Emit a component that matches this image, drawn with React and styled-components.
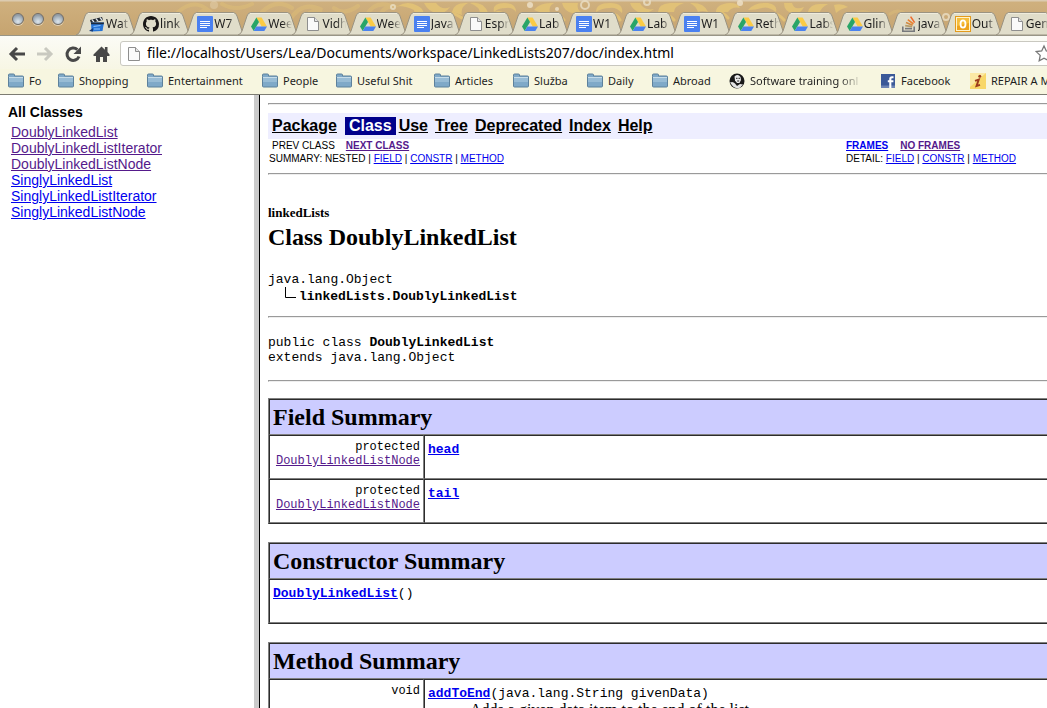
import React from "react";
import styled, { createGlobalStyle } from "styled-components";

const GlobalStyle = createGlobalStyle`
  *, *::before, *::after { box-sizing: border-box; }
  html, body, #root { height: 100%; }
  body {
    margin: 0;
    overflow: hidden;
    background: #ffffff;
    color: #000000;
    font-family: "Liberation Serif", serif;
  }
`;

/* ---------- window frame ---------- */

const Window = styled.div`
  display: flex;
  flex-direction: column;
  height: 100vh;
  overflow: hidden;
`;

const UI_FONT = `"Noto Sans", "Open Sans", sans-serif`;

const TitleBar = styled.header`
  position: relative;
  display: flex;
  align-items: flex-end;
  flex: none;
  height: 36px;
  overflow: hidden;
  background: linear-gradient(#dccbb0 0, #dccbb0 1px, #cfb07e 2px, #c6a470 100%);
  border-bottom: 1px solid #989586;
`;

const Ornament = styled.svg`
  position: absolute;
  top: 0;
  left: 0;
  width: 1047px;
  height: 36px;
`;

const WindowButtons = styled.div`
  position: relative;
  display: flex;
  flex: none;
  gap: 8px;
  width: 76px;
  padding: 0 0 10px 12px;
`;

const WindowButton = styled.button`
  width: 12px;
  height: 12px;
  padding: 0;
  border: 1px solid #716c66;
  border-radius: 50%;
  background: radial-gradient(circle at 50% 75%, #dde6ec 0, #b4bfc8 40%, #8d98a2 75%, #c3c9cc 100%);
  box-shadow: 0 1px 0 #e3d3b6;
`;

const TabStrip = styled.nav`
  position: relative;
  display: flex;
  flex: 1;
  min-width: 0;
  margin-right: -3px;
`;

const TabButton = styled.button`
  position: relative;
  display: flex;
  align-items: center;
  flex: 1 1 0;
  min-width: 0;
  height: 23px;
  padding: 0 0 0 13px;
  border: 0;
  background: none;
  font: 12px/20px ${UI_FONT};
  color: #1c1c1c;
  text-align: left;
`;

const TabShape = styled.svg`
  position: absolute;
  top: 0;
  left: 0;
  width: 63px;
  height: 23px;
`;

const TabIcon = styled.svg`
  position: relative;
  flex: none;
  width: 16px;
  height: 16px;
`;

const TabLabel = styled.span`
  position: relative;
  flex: none;
  width: 24px;
  margin-left: 1px;
  overflow: hidden;
  white-space: nowrap;
  mask-image: linear-gradient(90deg, #000 0, #000 60%, transparent 100%);
`;

/* ---------- toolbar ---------- */

const Toolbar = styled.div`
  display: flex;
  align-items: center;
  flex: none;
  height: 33px;
  padding: 4px 0 2px 8px;
  background: linear-gradient(#fbfbf6, #f7f6e4);
`;

const ToolButton = styled.button`
  display: flex;
  align-items: center;
  justify-content: center;
  flex: none;
  width: 28px;
  height: 24px;
  padding: 0 10px 0 0;
  border: 0;
  background: none;
`;

const ToolIcon = styled.svg`
  flex: none;
  width: 18px;
  height: 18px;
`;

const AddressBox = styled.label`
  display: flex;
  align-items: center;
  flex: 1;
  gap: 5px;
  height: 25px;
  margin-right: -4px;
  padding-left: 5px;
  background: #ffffff;
  border: 1px solid #c9c8c0;
  border-radius: 3px;
`;

const AddressInput = styled.input`
  flex: 1;
  min-width: 0;
  height: 20px;
  padding: 0 0 2px;
  border: 0;
  outline: 0;
  background: none;
  color: #000000;
  font: 14px/18px ${UI_FONT};
`;

const StarButton = styled.button`
  flex: none;
  width: 15px;
  height: 20px;
  padding: 0;
  border: 0;
  background: none;
  overflow: hidden;
`;

const BookmarkBar = styled.nav`
  display: flex;
  align-items: center;
  flex: none;
  height: 26px;
  padding: 0 0 1px 8px;
  overflow: hidden;
  background: #f7f6e0;
  border-bottom: 1px solid #7d7c72;
`;

const Bookmark = styled.a`
  display: flex;
  align-items: center;
  flex: none;
  gap: 5px;
  width: ${(p) => p.$width}px;
  color: #1e1e1e;
  font: 11px/16px ${UI_FONT};
  text-decoration: none;
  white-space: nowrap;
`;

const BookmarkIcon = styled.svg`
  flex: none;
  width: 16px;
  height: 16px;
`;

const BookmarkLabel = styled.span`
  ${(p) =>
    p.$fade &&
    `width: 112px; overflow: hidden; mask-image: linear-gradient(90deg, #000 0, #000 80%, transparent 100%);`}
`;

/* ---------- documentation frames ---------- */

const Frames = styled.div`
  display: flex;
  flex: 1;
  min-height: 0;
`;

const ClassFrame = styled.aside`
  flex: none;
  width: 260px;
  padding: 9px 8px;
  border-right: 1px solid #000000;
  box-shadow: inset -5px 0 0 #cbcbcb;
  font: 14px/16px "Liberation Sans", Arial, sans-serif;
`;

const ClassHeading = styled.h2`
  margin: 0 0 4px;
  font-size: 14px;
  line-height: 16px;
`;

const ClassList = styled.ul`
  margin: 0;
  padding: 0 0 0 3px;
  list-style: none;
`;

const DocLink = styled.a`
  color: ${(p) => (p.$visited ? "#551a8b" : "#0000ee")};
  text-decoration: underline;
`;

const DocFrame = styled.main`
  flex: 1;
  min-width: 0;
  padding: 8px 0 0 8px;
  overflow: hidden;
`;

const Rule = styled.hr`
  height: 2px;
  margin: 0;
  border: 0;
  border-top: 1px solid #9a9a9a;
  border-left: 1px solid #9a9a9a;
  border-bottom: 1px solid #eeeeee;
`;

const NavBar = styled.nav`
  display: flex;
  align-items: center;
  gap: 7px;
  height: 26px;
  margin-top: 8px;
  padding: 0 4px;
  background: #eeeeff;
  font: bold 16px/18px "Liberation Sans", Arial, sans-serif;
`;

const NavLink = styled.a`
  color: #000000;
`;

const NavCurrent = styled.span`
  margin: 0 -4px 0 1px;
  padding: 0 4px;
  background: #00008b;
  color: #ffffff;
`;

const SubNav = styled.div`
  display: grid;
  grid-template-columns: minmax(0, 1fr) 201px;
  margin-bottom: 8px;
  font: 10px/13px "Liberation Sans", Arial, sans-serif;
  white-space: pre;
`;

const SubNavCell = styled.div`
  padding-left: ${(p) => p.$indent || 0}px;
`;

const SubNavPair = styled.div`
  display: flex;
  gap: ${(p) => p.$gap}px;
  padding-left: ${(p) => p.$indent || 0}px;
  font-weight: ${(p) => (p.$bold ? "bold" : "normal")};
`;

const PackageName = styled.p`
  margin: 31px 0 0;
  font-size: 13px;
  font-weight: bold;
  line-height: 14px;
`;

const ClassTitle = styled.h1`
  margin: 3px 0 21px;
  font-size: 24px;
  line-height: 28px;
`;

const Code = styled.div`
  font: 13px/15px "Liberation Mono", "Courier New", monospace;
  white-space: pre;
`;

const TreeChild = styled.div`
  display: flex;
  align-items: center;
  height: 19px;
  padding-left: 16px;
`;

const TreeBranch = styled.svg`
  align-self: flex-start;
  width: 15px;
  height: 17px;
`;

const Tree = styled(Code)`
  margin-bottom: 10px;
`;

const Signature = styled(Code)`
  margin: 17px 0 15px;
`;

const SummaryTable = styled.table`
  width: 100%;
  margin: 16px 0 18px;
  border: 1px solid;
  border-color: #808080 #2c2c2c #2c2c2c #808080;
  border-right: 0;
  border-collapse: separate;
  border-spacing: 0;
  table-layout: fixed;
`;

const summaryCell = `
  border: 1px solid;
  border-color: #2c2c2c #808080 #808080 #2c2c2c;
`;

const SummaryHead = styled.th`
  ${summaryCell}
  border-right: 0;
  height: 36px;
  padding: 0 3px;
  background: #ccccff;
  font-size: 24px;
  line-height: 34px;
  text-align: left;
`;

const TypeCell = styled.td`
  ${summaryCell}
  height: 44px;
  padding: 4px 3px;
  font: 12px/14px "Liberation Mono", "Courier New", monospace;
  text-align: right;
  vertical-align: top;
`;

const MemberCell = styled.td`
  ${summaryCell}
  border-right: 0;
  height: 44px;
  padding: 6px 3px;
  font: 13px/15px "Liberation Mono", "Courier New", monospace;
  vertical-align: top;
`;

const Description = styled.p`
  margin: 0 0 0 42px;
  font: 16px/18px "Liberation Serif", serif;
`;

const TypeCol = styled.col`
  width: 155px;
`;

/* ---------- icons ---------- */

const Drive = () => (
  <>
    <path d="M5.4 1.500h5.200L16 10.600h-5.300z" fill="#fbcb45" />
    <path d="M5.400 1.500L8 6 2.700 15 0 10.600z" fill="#28a567" />
    <path d="M5.300 10.600H16L13.300 15H2.700z" fill="#4b82ee" />
  </>
);

const Doc = () => (
  <>
    <rect width="16" height="16" rx="1" fill="#4a80f0" />
    <path d="M3 5.500h10M3 7.500h10M3 9.500h10M3 11.500h7" stroke="#fff" />
  </>
);

const Page = () => (
  <>
    <path d="M2.500 1.500h7l4 4v9h-11z" fill="#fafafa" stroke="#8e8e8e" />
    <path d="M9.500 1.500v4h4" fill="#e4e4e4" stroke="#8e8e8e" />
  </>
);

const Clapper = () => (
  <>
    <path d="M1 4l12-3 1 3L2 7z" fill="#23282e" />
    <path d="M3 3.600l2 2.500M7 2.600l2 2.500M11 1.600l2 2.500" stroke="#dce6ee" strokeWidth="1.400" />
    <path d="M2 6.500h13l-1.500 8.500-11 .5z" fill="#2674d6" />
    <path d="M2 6.500h13l-.3 1.800H2z" fill="#1d2b3d" />
    <path d="M4.500 10.500l7-1M5 13h6" stroke="#8cc4ff" />
    <path d="M0 15l4-3v3.500z" fill="#163c78" />
  </>
);

const Github = () => (
  <path
    fill="#191717"
    fillRule="evenodd"
    d="M8 0C3.58 0 0 3.58 0 8c0 3.54 2.29 6.53 5.47 7.59.4.07.55-.17.55-.38 0-.19-.01-.82-.01-1.49-2.01.37-2.53-.49-2.69-.94-.09-.23-.48-.94-.82-1.13-.28-.15-.68-.52-.01-.53.63-.01 1.08.58 1.23.82.72 1.21 1.87.87 2.33.66.07-.52.28-.87.51-1.07-1.78-.2-3.64-.89-3.64-3.95 0-.87.31-1.59.82-2.15-.08-.2-.36-1.02.08-2.12 0 0 .67-.21 2.2.82.64-.18 1.32-.27 2-.27s1.36.09 2 .27c1.53-1.04 2.2-.82 2.2-.82.44 1.1.16 1.92.08 2.12.51.56.82 1.27.82 2.15 0 3.07-1.87 3.75-3.65 3.95.29.25.54.73.54 1.48 0 1.07-.01 1.93-.01 2.2 0 .21.15.46.55.38A8.01 8.01 0 0016 8c0-4.42-3.58-8-8-8z"
  />
);

const Stack = () => (
  <>
    <path d="M1.800 10.500v4.700h11.400v-4.700" fill="none" stroke="#77797c" strokeWidth="1.600" />
    <path d="M4 12.600h7" stroke="#77797c" strokeWidth="1.600" />
    <path d="M4.200 9.600l7 1" stroke="#b59b6a" strokeWidth="1.600" />
    <path d="M5 6.500l6.600 2.800" stroke="#d08a42" strokeWidth="1.600" />
    <path d="M6.800 3.600l5.600 4.400" stroke="#ea8230" strokeWidth="1.600" />
    <path d="M9.600.6l4 6" stroke="#ee6a2c" strokeWidth="1.600" />
  </>
);

const Outlook = () => (
  <>
    <rect x=".5" y=".5" width="15" height="15" fill="#fff3cb" stroke="#e39a1c" />
    <rect x="2" y="2" width="12" height="12" fill="#eda31c" />
    <path d="M2 2h12v5L2 10z" fill="#f6bd3a" />
    <ellipse cx="8" cy="8" rx="2.500" ry="3.600" fill="none" stroke="#fff" strokeWidth="1.800" />
  </>
);

const Folder = () => (
  <>
    <path d="M.5 3.500V2q0-1 1-1h4q1 0 1 1v1h8q1 0 1 1v9q0 1-1 1h-13q-1 0-1-1z" fill="#7fa9c8" stroke="#5d819c" />
    <path d="M1 5h14v4H1z" fill="#98bcd5" />
    <path d="M1 4.500h14" stroke="#c6dce9" />
  </>
);

const Portrait = () => (
  <>
    <circle cx="8" cy="8" r="7.500" fill="#191919" />
    <path d="M5.500 3.500Q9 .5 11.500 4l.5 3-1.500 3H8L6 7.500z" fill="#e9e9e9" />
    <path d="M1 9.500Q4 8 6 10.500l2 2.500 3-2 3 .5-3 3.200Q7 16 4 13.500z" fill="#e4e4e4" />
    <path d="M7 5.300h1.500M9.500 5.300H11M8.200 8h2" stroke="#222" />
  </>
);

const Facebook = () => (
  <>
    <rect x="1" y="1" width="14" height="14" fill="#3b5998" />
    <path d="M1 12.500h14V15H1z" fill="#6d84b4" />
    <path d="M13.500 4.200h-1.500q-1.700 0-1.700 1.700V15M7.800 8.200h5.600" fill="none" stroke="#fff" strokeWidth="2.100" />
  </>
);

const Repair = () => (
  <>
    <rect width="16" height="16" fill="#f8d768" />
    <path d="M0 0h16L0 14z" fill="#fbe9a5" />
    <circle cx="9.800" cy="3.300" r="1.500" fill="#9c3c1c" />
    <path d="M5 7.800l3.800-1.300-2.300 6.500 3.500-1.200" fill="none" stroke="#9c3c1c" strokeWidth="1.900" />
  </>
);

const TABS = [
  [Clapper, "Wat"],
  [Github, "link"],
  [Doc, "W7"],
  [Drive, "Wee"],
  [Page, "Vidh"],
  [Drive, "Wee"],
  [Doc, "Java"],
  [Page, "Espr"],
  [Drive, "Lab"],
  [Doc, "W1"],
  [Drive, "Lab"],
  [Doc, "W1"],
  [Drive, "Reth"],
  [Drive, "Labs"],
  [Drive, "Glin"],
  [Stack, "java"],
  [Outlook, "Out"],
  [Page, "Gen"],
];

const BOOKMARKS = [
  [Folder, "Fo", 50],
  [Folder, "Shopping", 89],
  [Folder, "Entertainment", 115],
  [Folder, "People", 74],
  [Folder, "Useful Shit", 98],
  [Folder, "Articles", 79],
  [Folder, "Služba", 74],
  [Folder, "Daily", 65],
  [Folder, "Abroad", 77],
  [Portrait, "Software training onl", 151],
  [Facebook, "Facebook", 90],
  [Repair, "REPAIR A MAC", 120],
];

const CLASSES = [
  ["DoublyLinkedList", true],
  ["DoublyLinkedListIterator", true],
  ["DoublyLinkedListNode", true],
  ["SinglyLinkedList", false],
  ["SinglyLinkedListIterator", false],
  ["SinglyLinkedListNode", false],
];

const FIELDS = ["head", "tail"];

/* ---------- parts ---------- */

function TitleOrnament() {
  return (
    <Ornament aria-hidden="true" fill="none" stroke="#e6c676" strokeLinecap="round">
      <g strokeWidth="4" opacity=".35">
        <path d="M178 12q16-14 30-2q-10 0-12 10M222 4q14 8 30 0M262 12q14-14 30-4" />
        <path d="M290 20q12-20 32-10q-14 0-16 8M334 8q10 8 24-2" />
        <path d="M366 16q8-16 26-10q-10 2-12 10" />
      </g>
      <g fill="#e6c676" stroke="none" opacity=".8">
        <path d="M398 6q10-6 20 0q8 4 4 12q-8-2-8-8q-8-4-16-4zM424 3h12q6 8 14 4q-6 8-14 6q-8-2-12-10z" />
        <path d="M452 12q2-10 16-9q-8 4-6 12zM470 3q14-2 18 10h-8q0-6-10-10zM494 12q-2-9 10-9q12 0 12 9q-4-5-10-4q-8 0-12 4z" />
        <path d="M534 10q6-8 20-7q-6 3-4 10h-8zM562 3h16q-2 6 4 10h-10q-8-2-10-10zM596 12q0-9 14-9q14 0 12 10q-6-6-12-5q-8 0-14 4z" />
        <path d="M630 3h10q4 8 14 6q-8 6-16 3q-6-3-8-9zM658 12q0-8 12-9h14q-10 3-10 9zM690 3q14-1 18 9q-6-2-10 0q-2-6-8-9z" />
        <path d="M716 12q0-8 14-9q8 0 10 5q-8-2-12 4zM748 10q6-8 20-7q10 2 8 9q-8-6-14-4q-6 2-14 2zM784 3h8q2 8 12 4q-4 8-12 6q-8-2-8-10z" />
        <path d="M808 12q2-8 12-8h8q-8 4-8 9zM834 5q8-2 14 2q-8 2-12 6z" />
      </g>
      <g strokeWidth="3" opacity=".8">
        <path d="M440 20q8-12 22-2M488 20q10-14 20-2M546 24q8-16 18-4M604 22q10-14 16-2M656 24q8-16 18-4M710 22q8-16 18-4M768 24q6-16 16-4" />
      </g>
      <g stroke="#eadfc6" strokeWidth="2" opacity=".8">
        <circle cx="393" cy="7" r="2" />
        <circle cx="585" cy="5" r="4" />
        <circle cx="647" cy="2" r="3" />
        <circle cx="946" cy="17" r="3" />
      </g>
      <g fill="#efe3cb" stroke="none" opacity=".8">
        <circle cx="214" cy="5" r="4" opacity=".4" />
        <circle cx="530" cy="5" r="3" />
        <circle cx="557" cy="9" r="2" />
        <circle cx="740" cy="3" r="3" />
      </g>
      <g strokeWidth="3" opacity=".3">
        <path d="M852 16q10-8 20-2M890 14q8-6 16 0" />
      </g>
    </Ornament>
  );
}

function Tab({ icon: Glyph, label }) {
  return (
    <TabButton>
      <TabShape aria-hidden="true">
        <path
          d="M0 23Q3 22 4 19L9 4Q10 .5 13 .5H49Q52 .5 53 4L58 19Q59 22 62 23z"
          fill="#e0ddca"
          stroke="#9a9382"
        />
        <path d="M12 1.500H50" stroke="#efecdd" />
      </TabShape>
      <TabIcon viewBox="0 0 16 16" aria-hidden="true">
        <Glyph />
      </TabIcon>
      <TabLabel>{label}</TabLabel>
    </TabButton>
  );
}

function BrowserToolbar() {
  return (
    <Toolbar>
      <ToolButton aria-label="Back">
        <ToolIcon viewBox="0 0 18 18" fill="none" stroke="#484848" strokeWidth="3">
          <path d="M3 9h14M9 3L3 9l6 6" />
        </ToolIcon>
      </ToolButton>
      <ToolButton aria-label="Forward">
        <ToolIcon viewBox="0 0 18 18" fill="none" stroke="#c9c9c0" strokeWidth="3">
          <path d="M1 9h14M9 3l6 6-6 6" />
        </ToolIcon>
      </ToolButton>
      <ToolButton aria-label="Reload">
        <ToolIcon viewBox="0 0 18 18">
          <path d="M15 11.500A6.200 6.200 0 1 1 13.400 4.600" fill="none" stroke="#484848" strokeWidth="3" />
          <path d="M17 1.500v7.500h-7.500z" fill="#484848" />
        </ToolIcon>
      </ToolButton>
      <ToolButton aria-label="Home">
        <ToolIcon viewBox="0 0 18 18" fill="#484848">
          <path d="M9.500 1.500L1.500 9.500V11H4v6h4v-5h3v5h4v-6h2.500V9.500L15.500 7V2h-2.600v2.700z" />
        </ToolIcon>
      </ToolButton>
      <AddressBox>
        <BookmarkIcon viewBox="0 0 16 16" aria-hidden="true">
          <Page />
        </BookmarkIcon>
        <AddressInput
          aria-label="Address"
          defaultValue="file://localhost/Users/Lea/Documents/workspace/LinkedLists207/doc/index.html"
        />
        <StarButton aria-label="Bookmark this page">
          <svg width="20" height="20" viewBox="0 0 20 20" fill="#fff" stroke="#777" strokeWidth="1.300">
            <path d="M9 2l2.300 5 5.500.6-4 3.800 1 5.400L9 14.200l-4.800 2.600 1-5.400-4-3.800 5.500-.6z" />
          </svg>
        </StarButton>
      </AddressBox>
    </Toolbar>
  );
}

function AnchorLinks({ names }) {
  return names.map((name) => (
    <React.Fragment key={name}>
      {name !== names[0] && " | "}
      <DocLink href={"#" + name.toLowerCase()}>{name}</DocLink>
    </React.Fragment>
  ));
}

function DocHeader() {
  return (
    <>
      <Rule />
      <NavBar>
        <NavLink href="#package">Package</NavLink>
        <NavCurrent>Class</NavCurrent>
        <NavLink href="#use">Use</NavLink>
        <NavLink href="#tree">Tree</NavLink>
        <NavLink href="#deprecated">Deprecated</NavLink>
        <NavLink href="#index">Index</NavLink>
        <NavLink href="#help">Help</NavLink>
      </NavBar>
      <SubNav>
        <SubNavPair $indent={4} $gap={11}>
          <span>PREV CLASS</span>
          <b>
            <DocLink href="#next" $visited>NEXT CLASS</DocLink>
          </b>
        </SubNavPair>
        <SubNavPair $gap={12} $bold>
          <DocLink href="#frames">FRAMES</DocLink>
          <DocLink href="#noframes" $visited>NO FRAMES</DocLink>
        </SubNavPair>
        <SubNavCell $indent={1}>
          {"SUMMARY: NESTED | "}
          <AnchorLinks names={["FIELD", "CONSTR", "METHOD"]} />
        </SubNavCell>
        <SubNavCell>
          {"DETAIL: "}
          <AnchorLinks names={["FIELD", "CONSTR", "METHOD"]} />
        </SubNavCell>
      </SubNav>
      <Rule />
    </>
  );
}

function FieldSummary() {
  return (
    <SummaryTable>
      <colgroup>
        <TypeCol />
        <col />
      </colgroup>
      <thead>
        <tr>
          <SummaryHead colSpan={2}>Field Summary</SummaryHead>
        </tr>
      </thead>
      <tbody>
        {FIELDS.map((field) => (
          <tr key={field}>
            <TypeCell>
              protected <DocLink href="#node" $visited>DoublyLinkedListNode</DocLink>
            </TypeCell>
            <MemberCell>
              <b>
                <DocLink href={"#" + field}>{field}</DocLink>
              </b>
            </MemberCell>
          </tr>
        ))}
      </tbody>
    </SummaryTable>
  );
}

function ConstructorSummary() {
  return (
    <SummaryTable>
      <thead>
        <tr>
          <SummaryHead>Constructor Summary</SummaryHead>
        </tr>
      </thead>
      <tbody>
        <tr>
          <MemberCell>
            <b>
              <DocLink href="#constructor">DoublyLinkedList</DocLink>
            </b>
            ()
          </MemberCell>
        </tr>
      </tbody>
    </SummaryTable>
  );
}

function MethodSummary() {
  return (
    <SummaryTable>
      <colgroup>
        <TypeCol />
        <col />
      </colgroup>
      <thead>
        <tr>
          <SummaryHead colSpan={2}>Method Summary</SummaryHead>
        </tr>
      </thead>
      <tbody>
        <tr>
          <TypeCell>void</TypeCell>
          <MemberCell>
            <b>
              <DocLink href="#addToEnd">addToEnd</DocLink>
            </b>
            (java.lang.String givenData)
            <Description>Adds a given data item to the end of the list.</Description>
          </MemberCell>
        </tr>
      </tbody>
    </SummaryTable>
  );
}

export default function App() {
  return (
    <Window>
      <GlobalStyle />
      <TitleBar>
        <TitleOrnament />
        <WindowButtons>
          <WindowButton aria-label="Close" />
          <WindowButton aria-label="Minimize" />
          <WindowButton aria-label="Zoom" />
        </WindowButtons>
        <TabStrip aria-label="Tabs">
          {TABS.map(([icon, label], i) => (
            <Tab key={i} icon={icon} label={label} />
          ))}
        </TabStrip>
      </TitleBar>
      <BrowserToolbar />
      <BookmarkBar aria-label="Bookmarks">
        {BOOKMARKS.map(([Glyph, label, width]) => (
          <Bookmark key={label} href="#bookmark" $width={width}>
            <BookmarkIcon viewBox="0 0 16 16" aria-hidden="true">
              <Glyph />
            </BookmarkIcon>
            <BookmarkLabel $fade={Glyph === Portrait}>{label}</BookmarkLabel>
          </Bookmark>
        ))}
      </BookmarkBar>
      <Frames>
        <ClassFrame>
          <ClassHeading>All Classes</ClassHeading>
          <ClassList>
            {CLASSES.map(([name, visited]) => (
              <li key={name}>
                <DocLink href={"#" + name} $visited={visited}>{name}</DocLink>
              </li>
            ))}
          </ClassList>
        </ClassFrame>
        <DocFrame>
          <DocHeader />
          <PackageName>linkedLists</PackageName>
          <ClassTitle>Class DoublyLinkedList</ClassTitle>
          <Tree>
            java.lang.Object
            <TreeChild>
              <TreeBranch aria-hidden="true">
                <path d="M1.500 0V10.500H12" fill="none" stroke="#000" />
              </TreeBranch>
              <b>linkedLists.DoublyLinkedList</b>
            </TreeChild>
          </Tree>
          <Rule />
          <Signature>
            {"public class "}
            <b>DoublyLinkedList</b>
            {"\nextends java.lang.Object"}
          </Signature>
          <Rule />
          <FieldSummary />
          <ConstructorSummary />
          <MethodSummary />
        </DocFrame>
      </Frames>
    </Window>
  );
}
